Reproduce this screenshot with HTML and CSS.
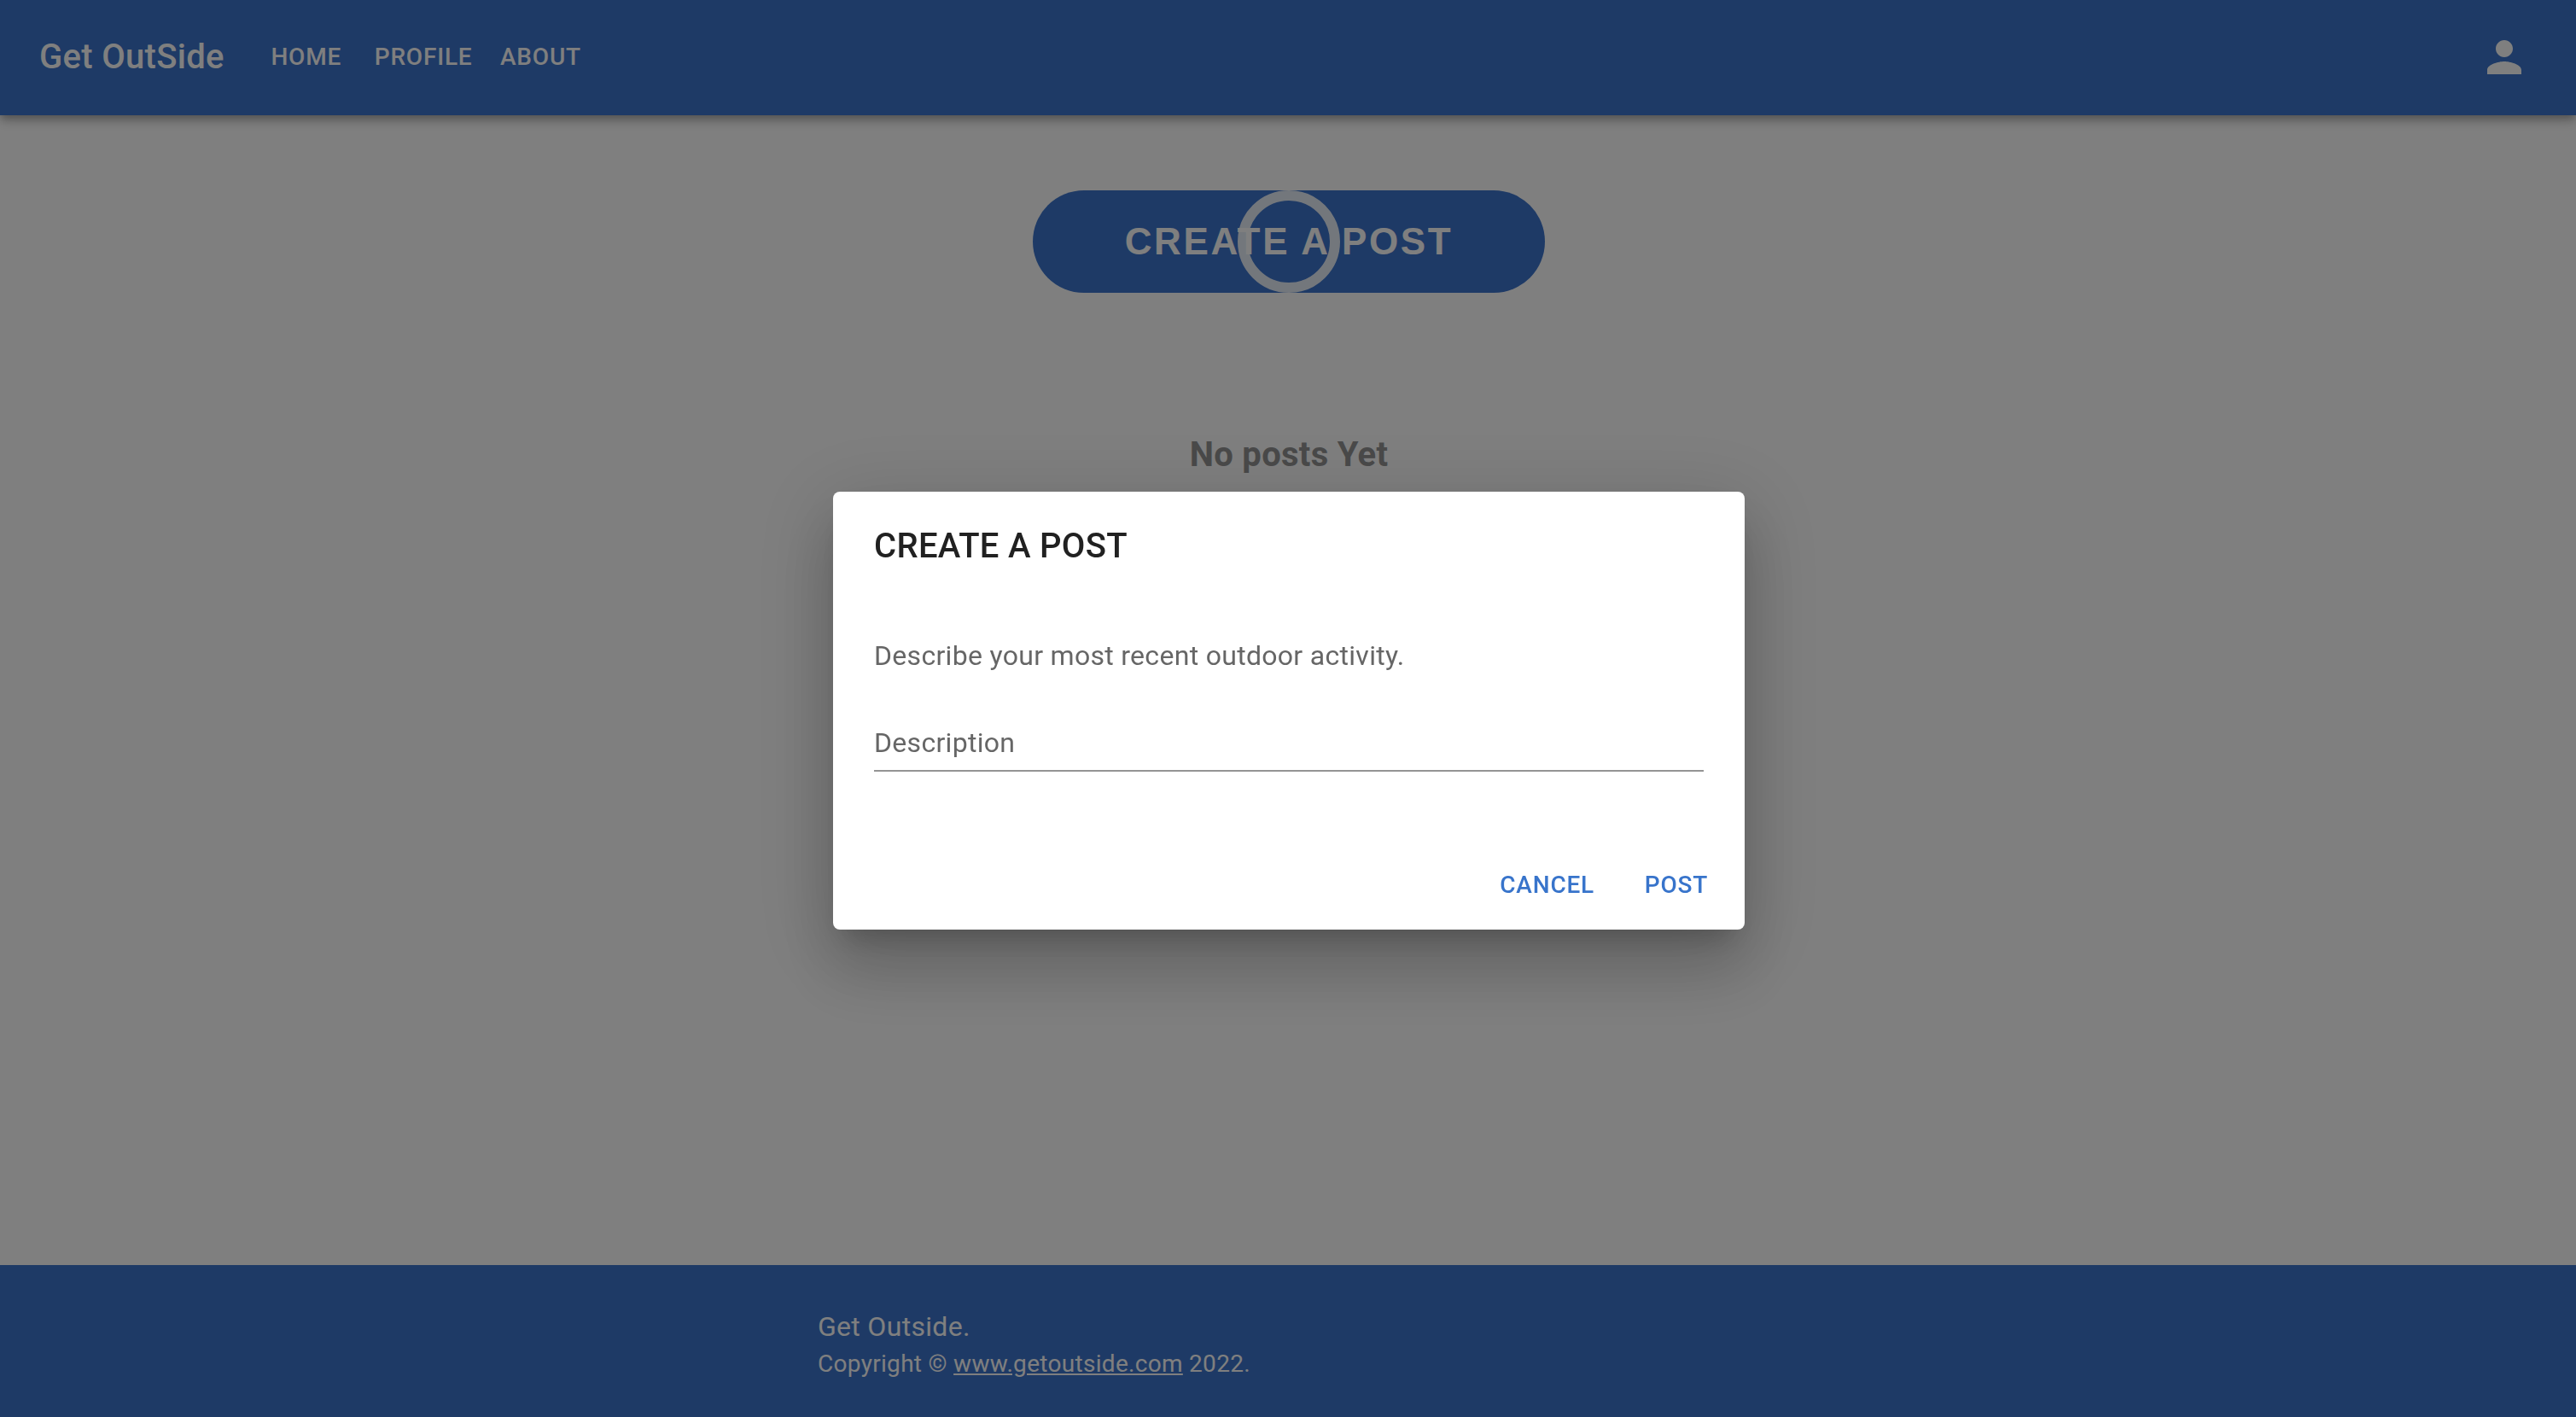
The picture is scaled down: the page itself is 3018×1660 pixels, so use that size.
FILE: index.html
```html
<!DOCTYPE html>
<html lang="en">
<head>
  <meta charset="utf-8">
  <meta name="viewport" content="width=device-width, initial-scale=1">
  <title>Get OutSide</title>
  <link rel="stylesheet" href="styles.css">
</head>
<body>
  <div class="page">
    <header class="app-bar">
      <div class="brand">Get OutSide</div>
      <nav class="nav">
        <a class="nav-link" href="#home">HOME</a>
        <a class="nav-link" href="#profile">PROFILE</a>
        <a class="nav-link" href="#about">ABOUT</a>
      </nav>
      <button class="account" type="button" aria-label="Account">
        <svg class="account-icon" viewBox="0 0 24 24" aria-hidden="true">
          <path fill="currentColor" d="M12 12c2.21 0 4-1.79 4-4s-1.79-4-4-4-4 1.79-4 4 1.79 4 4 4zm0 2c-2.67 0-8 1.34-8 4v2h16v-2c0-2.66-5.33-4-8-4z"/>
        </svg>
      </button>
    </header>
    <main class="feed">
      <button class="create" type="button">CREATE A POST<span class="ripple"></span></button>
      <h2 class="empty">No posts Yet</h2>
    </main>
    <footer class="footer">
      <div class="footer-inner">
        <p class="footer-title">Get Outside.</p>
        <p class="footer-copy">Copyright © <a class="footer-link" href="#site">www.getoutside.com</a> 2022.</p>
      </div>
    </footer>
  </div>
  <div class="backdrop">
    <form class="dialog" role="dialog" aria-modal="true" aria-labelledby="dialog-title">
      <h2 class="dialog-title" id="dialog-title">CREATE A POST</h2>
      <div class="dialog-content">
        <p class="dialog-text">Describe your most recent outdoor activity.</p>
        <div class="field">
          <label class="field-label" for="description">Description</label>
          <input class="field-input" id="description" type="text">
        </div>
      </div>
      <div class="dialog-actions">
        <button class="action" type="button">CANCEL</button>
        <button class="action" type="submit">POST</button>
      </div>
    </form>
  </div>
</body>
</html>
```
FILE: styles.css
```css
* {
  box-sizing: border-box;
}

body {
  margin: 0;
  background: #fff;
  color: #212121;
  font-family: Roboto, "Liberation Sans", sans-serif;
  font-size: 32px;
  line-height: 48px;
  letter-spacing: 0.00938em;
}

h2,
p {
  margin: 0;
}

button {
  border: 0;
  background: none;
  cursor: pointer;
}

.page {
  display: flex;
  flex-direction: column;
  min-height: 100vh;
}

.app-bar {
  display: flex;
  align-items: center;
  min-height: 135px;
  padding: 0 48px 2px 46px;
  background: #3c74cc;
  color: #fff;
  box-shadow: 0 4px 8px -2px rgba(0, 0, 0, 0.2), 0 8px 10px rgba(0, 0, 0, 0.14), 0 2px 20px rgba(0, 0, 0, 0.12);
}

.brand {
  margin-right: 32px;
  font-size: 40px;
  font-weight: 500;
  line-height: 64px;
  letter-spacing: 0.0075em;
}

.nav {
  display: flex;
  flex: 1;
}

.nav-link,
.action {
  min-width: 128px;
  padding: 12px 16px;
  font-family: inherit;
  font-size: 28px;
  font-weight: 500;
  line-height: 49px;
  letter-spacing: 0.02857em;
  text-align: center;
}

.nav-link {
  color: inherit;
  text-decoration: none;
}

.account {
  display: flex;
  padding: 6px;
  color: inherit;
}

.account-icon {
  width: 60px;
  height: 60px;
}

.feed {
  display: flex;
  flex: 1;
  flex-direction: column;
  align-items: center;
  padding: 88px 48px 88px 50px;
}

.create {
  position: relative;
  width: 600px;
  max-width: 100%;
  height: 120px;
  border-radius: 60px;
  background: #3c74cc;
  color: #fff;
  font-family: "Liberation Sans", Arial, sans-serif;
  font-size: 44px;
  font-weight: 700;
  letter-spacing: 0.06em;
}

.ripple {
  position: absolute;
  inset: 0;
  width: 120px;
  margin: 0 auto;
  border: 12px solid rgba(255, 255, 255, 0.88);
  border-radius: 50%;
}

.empty {
  margin-top: 158px;
  color: #949494;
  font-size: 40px;
  font-weight: 700;
  line-height: 64px;
  letter-spacing: 0.0075em;
}

.footer {
  background: #3c74cc;
  color: #fff;
}

.footer-inner {
  max-width: 1200px;
  margin: 0 auto;
  padding: 48px 48px 42px 49px;
}

.footer-copy {
  font-size: 28px;
  line-height: 40px;
  letter-spacing: 0.01071em;
}

.footer-link {
  color: inherit;
}

.backdrop {
  position: fixed;
  inset: 0;
  display: flex;
  align-items: center;
  justify-content: center;
  padding: 4px 0 0 2px;
  background: rgba(0, 0, 0, 0.5);
}

.dialog {
  width: 1068px;
  max-width: 100%;
  border-radius: 8px;
  background: #fff;
  box-shadow: 0 22px 30px -14px rgba(0, 0, 0, 0.2), 0 48px 76px 6px rgba(0, 0, 0, 0.14), 0 18px 92px 16px rgba(0, 0, 0, 0.12);
}

.dialog-title {
  padding: 32px 48px;
  font-size: 40px;
  font-weight: 500;
  line-height: 64px;
  letter-spacing: 0.0075em;
}

.dialog-content {
  padding: 40px 48px 80px;
}

.dialog-text {
  color: #666;
}

.field {
  display: grid;
  margin-top: 48px;
}

.field-label,
.field-input {
  grid-area: 1 / 1;
}

.field-label {
  padding-top: 6px;
  color: #666;
  pointer-events: none;
}

.field-input {
  width: 100%;
  height: 64px;
  padding: 8px 0;
  border: 0;
  border-bottom: 2px solid #949494;
  background: none;
  font: inherit;
  outline: 0;
}

.dialog-actions {
  display: flex;
  justify-content: flex-end;
  gap: 16px;
  padding: 16px;
}

.action {
  border-radius: 8px;
  color: #3874cb;
}
```
